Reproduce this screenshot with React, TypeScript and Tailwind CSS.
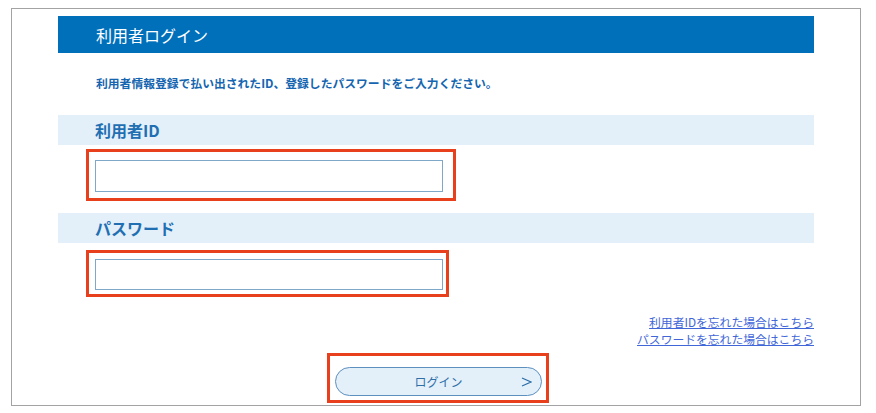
export default function App() {
  return (
    <div
      className="w-[876px] h-[413px] bg-white pt-[8px] pl-[11px]"
      style={{ fontFamily: '"Noto Sans CJK JP", "Noto Sans", sans-serif' }}
    >
      <div className="w-[850px] h-[398px] border border-[#a3a3a3] px-[46px] pt-[7px] overflow-visible">
        <div className="h-[37px] bg-[#0070bb] flex items-center pl-[38px]">
          <h1 className="text-white text-[16px] leading-none">利用者ログイン</h1>
        </div>

        <p className="mt-[22px] pl-[38px] text-[11.8px] leading-[16px] font-bold text-[#1565b0]">
          利用者情報登録で払い出されたID、登録したパスワードをご入力ください。
        </p>

        <div className="mt-[24px] h-[30px] bg-[#e3f0fa] flex items-center pl-[37px]">
          <span className="text-[16px] font-bold text-[#1f6fb2] leading-none">利用者ID</span>
        </div>
        <div className="mt-[4px] ml-[28px] w-[370px] h-[52px] border-[3px] border-[#e8401c] pt-[8px] pl-[6px]">
          <input
            type="text"
            className="block w-[348px] h-[32px] border border-[#7fa7c8] bg-white outline-none"
          />
        </div>

        <div className="mt-[12px] h-[30px] bg-[#e3f0fa] flex items-center pl-[37px]">
          <span className="text-[16px] font-bold text-[#1f6fb2] leading-none">パスワード</span>
        </div>
        <div className="mt-[7px] ml-[28px] w-[363px] h-[47px] border-[3px] border-[#e8401c] pt-[6px] pl-[6px]">
          <input
            type="password"
            className="block w-[348px] h-[31px] border border-[#7fa7c8] bg-white outline-none"
          />
        </div>

        <div className="mt-[16px] flex flex-col items-end text-[11.8px] leading-[17px] text-[#4166d8]">
          <a href="#" className="underline">利用者IDを忘れた場合はこちら</a>
          <a href="#" className="underline">パスワードを忘れた場合はこちら</a>
        </div>

        <div className="mt-[6px] flex justify-center pl-[4px]">
          <div className="w-[222px] h-[50px] border-[3px] border-[#e8401c] pt-[11px] pl-[5px]">
            <button className="relative w-[207px] h-[29px] rounded-full border border-[#5d8fbf] bg-[#e3f0fa] text-[#2f6fa8] text-[12px] flex items-center justify-center">
              <span>ログイン</span>
              <svg
                className="absolute right-[9px] top-1/2 -translate-y-1/2"
                width="11"
                height="11"
                viewBox="0 0 11 11"
                fill="none"
                stroke="#2f6fa8"
                strokeWidth="1.3"
              >
                <path d="M1 1.5 L10 5.5 L1 9.5" />
              </svg>
            </button>
          </div>
        </div>
      </div>
    </div>
  );
}
